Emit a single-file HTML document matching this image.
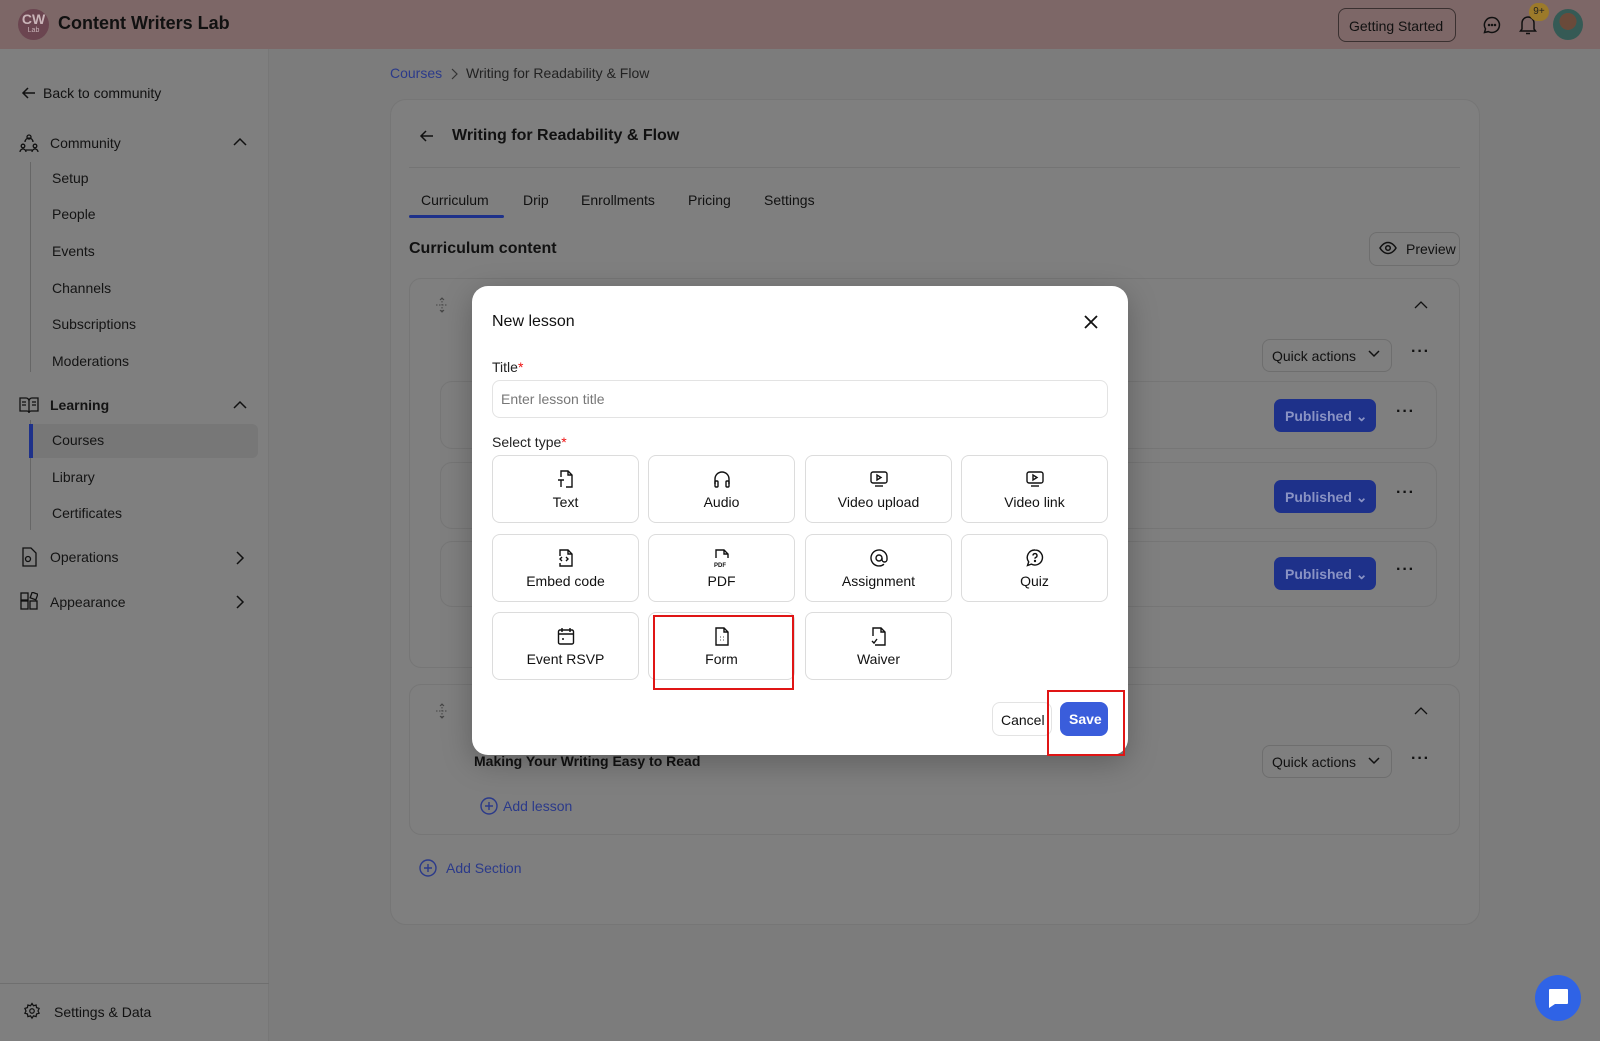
<!DOCTYPE html>
<html><head><meta charset="utf-8">
<style>
*{box-sizing:border-box;margin:0;padding:0}
body{width:1600px;height:1041px;overflow:hidden;font-family:"Liberation Sans",sans-serif;background:#7c7c7c;color:#111;position:relative;font-size:14px}
.abs{position:absolute}
.hdr{left:0;top:0;width:1600px;height:49px;background:#7d6767}
.side{left:0;top:49px;width:269px;height:992px;background:#7f7f7f;border-right:1px solid #777}
.si{position:absolute;left:52px;font-size:14px;color:#141414}
.sh{position:absolute;left:50px;font-size:14px;color:#141414}
.card{background:#7f7f7f;border:1px solid #767676;border-radius:16px}
.btn{border:1px solid #6c6c6c;border-radius:8px}
.pub{position:absolute;left:1274px;width:102px;height:33px;background:#1e318a;border-radius:7px;color:#8a93c4;font-weight:bold;font-size:14px;padding:9px 0 0 11px}
.dots{position:absolute;font-weight:bold;font-size:16px;letter-spacing:1px;color:#111}
.tile{position:absolute;width:147px;height:68px;border:1px solid #dcdcdc;border-radius:8px;background:#fff;text-align:center;font-size:14px;color:#111}
.tile svg{position:absolute;left:64px;top:13px}
.tile span{position:absolute;left:0;right:0;top:38px}
</style></head><body>
<div class="abs hdr"></div>
<div class="abs" style="left:18px;top:9px;width:31px;height:31px;border-radius:50%;background:#6b4550;color:#c9b4b8;text-align:center;font-size:14px;line-height:20px;font-weight:bold">CW<div style="font-size:7px;line-height:4px;font-weight:normal">Lab</div></div>
<div class="abs" style="left:58px;top:13px;font-size:18px;font-weight:bold;color:#111">Content Writers Lab</div>
<div class="abs btn" style="left:1338px;top:8px;width:118px;height:34px;border-color:#3a3030;font-size:14px;padding:9px 0 0 10px;color:#111">Getting Started</div>
<svg class="abs" style="left:1482px;top:15px" width="20" height="20" viewBox="0 0 20 20" fill="none" stroke="#111" stroke-width="1.5"><path d="M10 2.5a7.5 7.5 0 1 1-3.6 14.1L2.5 17.5l1-3.6A7.5 7.5 0 0 1 10 2.5z"/><circle cx="7" cy="10" r=".5" fill="#111"/><circle cx="10" cy="10" r=".5" fill="#111"/><circle cx="13" cy="10" r=".5" fill="#111"/></svg>
<svg class="abs" style="left:1518px;top:14px" width="20" height="22" viewBox="0 0 20 22" fill="none" stroke="#111" stroke-width="1.5"><path d="M4 15V9a6 6 0 0 1 12 0v6l1.5 2h-15z"/><path d="M8 19.5h4"/></svg>
<div class="abs" style="left:1529px;top:3px;width:20px;height:18px;border-radius:9px;background:#9c7a2a;color:#222;font-size:10px;text-align:center;line-height:18px">9+</div>
<div class="abs" style="left:1553px;top:9px;width:30px;height:31px;border-radius:50%;background:radial-gradient(circle at 50% 40%,#6a4a3a 0 35%,#355a55 36% 100%)"></div>

<div class="abs side"></div>
<svg class="abs" style="left:21px;top:85px" width="16" height="16" viewBox="0 0 16 16" fill="none" stroke="#111" stroke-width="1.5"><path d="M14 8H2M7 3L2 8l5 5"/></svg>
<div class="abs" style="left:43px;top:85px;font-size:14px">Back to community</div>
<svg class="abs" style="left:19px;top:133px" width="20" height="20" viewBox="0 0 20 20" fill="none" stroke="#111" stroke-width="1.3"><circle cx="10" cy="4" r="2"/><path d="M6 9a4 4 0 0 1 8 0"/><circle cx="4" cy="13" r="1.8"/><circle cx="16" cy="13" r="1.8"/><path d="M1 19a3 3 0 0 1 6 0M13 19a3 3 0 0 1 6 0M7 17h6"/></svg>
<div class="sh" style="top:135px">Community</div>
<svg class="abs" style="left:232px;top:136px" width="16" height="12" viewBox="0 0 16 12" fill="none" stroke="#111" stroke-width="1.5"><path d="M2 9l6-6 6 6"/></svg>
<div class="abs" style="left:30px;top:162px;width:1px;height:210px;background:#666"></div>
<div class="si" style="top:170px">Setup</div>
<div class="si" style="top:206px">People</div>
<div class="si" style="top:243px">Events</div>
<div class="si" style="top:280px">Channels</div>
<div class="si" style="top:316px">Subscriptions</div>
<div class="si" style="top:353px">Moderations</div>
<svg class="abs" style="left:19px;top:396px" width="20" height="18" viewBox="0 0 20 18" fill="none" stroke="#111" stroke-width="1.3"><path d="M1 2h6a3 3 0 0 1 3 3v12a2 2 0 0 0-2-2H1zM19 2h-6a3 3 0 0 0-3 3v12a2 2 0 0 1 2-2h7z"/><path d="M3 6h4M3 9h4M13 6h4M13 9h4"/></svg>
<div class="sh" style="top:397px;font-weight:bold">Learning</div>
<svg class="abs" style="left:232px;top:399px" width="16" height="12" viewBox="0 0 16 12" fill="none" stroke="#111" stroke-width="1.5"><path d="M2 9l6-6 6 6"/></svg>
<div class="abs" style="left:30px;top:420px;width:1px;height:110px;background:#666"></div>
<div class="abs" style="left:30px;top:424px;width:228px;height:34px;background:#777;border-radius:0 6px 6px 0"></div>
<div class="abs" style="left:29px;top:424px;width:4px;height:34px;background:#1e318a"></div>
<div class="si" style="top:432px">Courses</div>
<div class="si" style="top:469px">Library</div>
<div class="si" style="top:505px">Certificates</div>
<svg class="abs" style="left:20px;top:547px" width="18" height="20" viewBox="0 0 18 20" fill="none" stroke="#111" stroke-width="1.3"><path d="M3 1h8l5 5v13H3z"/><circle cx="8" cy="12" r="2.5"/></svg>
<div class="sh" style="top:549px">Operations</div>
<svg class="abs" style="left:234px;top:550px" width="12" height="16" viewBox="0 0 12 16" fill="none" stroke="#111" stroke-width="1.5"><path d="M3 2l6 6-6 6"/></svg>
<svg class="abs" style="left:20px;top:592px" width="18" height="18" viewBox="0 0 18 18" fill="none" stroke="#111" stroke-width="1.3"><rect x="1" y="9" width="7" height="8"/><rect x="10" y="9" width="7" height="8"/><rect x="1" y="1" width="7" height="7"/><rect x="11" y="1" width="6" height="6" transform="rotate(20 14 4)"/></svg>
<div class="sh" style="top:594px">Appearance</div>
<svg class="abs" style="left:234px;top:594px" width="12" height="16" viewBox="0 0 12 16" fill="none" stroke="#111" stroke-width="1.5"><path d="M3 2l6 6-6 6"/></svg>
<div class="abs" style="left:0;top:983px;width:269px;height:1px;background:#6f6f6f"></div>
<svg class="abs" style="left:23px;top:1002px" width="18" height="18" viewBox="0 0 24 24" fill="none" stroke="#111" stroke-width="1.6"><circle cx="12" cy="12" r="3"/><path d="M12 2l2 3 3.5-1 .5 3.5 3.5 1-1.5 3.5 1.5 3-3.5 1-.5 3.5-3.5-1-2 3-2-3-3.5 1-.5-3.5-3.5-1 1.5-3-1.5-3.5 3.5-1 .5-3.5 3.5 1z"/></svg>
<div class="abs" style="left:54px;top:1004px;font-size:14px">Settings &amp; Data</div>

<div class="abs" style="left:390px;top:65px;font-size:14px;color:#2b3a8a">Courses</div>
<svg class="abs" style="left:450px;top:68px" width="8" height="12" viewBox="0 0 8 12" fill="none" stroke="#333" stroke-width="1.2"><path d="M2 1l5 5-5 5"/></svg>
<div class="abs" style="left:466px;top:65px;font-size:14px;color:#222">Writing for Readability &amp; Flow</div>
<div class="abs card" style="left:390px;top:99px;width:1090px;height:826px"></div>
<svg class="abs" style="left:419px;top:128px" width="16" height="16" viewBox="0 0 16 16" fill="none" stroke="#111" stroke-width="1.5"><path d="M14 8H2M7 3L2 8l5 5"/></svg>
<div class="abs" style="left:452px;top:127px;font-size:16px;font-weight:bold;color:#111">Writing for Readability &amp; Flow</div>
<div class="abs" style="left:409px;top:167px;width:1051px;height:1px;background:#747474"></div>
<div class="abs" style="left:421px;top:192px;font-size:14px">Curriculum</div>
<div class="abs" style="left:523px;top:192px;font-size:14px">Drip</div>
<div class="abs" style="left:581px;top:192px;font-size:14px">Enrollments</div>
<div class="abs" style="left:688px;top:192px;font-size:14px">Pricing</div>
<div class="abs" style="left:764px;top:192px;font-size:14px">Settings</div>
<div class="abs" style="left:409px;top:215px;width:95px;height:3px;background:#1e318a;border-radius:2px"></div>
<div class="abs" style="left:409px;top:240px;font-size:16px;font-weight:bold">Curriculum content</div>
<div class="abs btn" style="left:1369px;top:232px;width:91px;height:34px;border-color:#6e6e6e;padding:8px 0 0 36px;font-size:14px">Preview</div>
<svg class="abs" style="left:1379px;top:241px" width="18" height="14" viewBox="0 0 18 14" fill="none" stroke="#111" stroke-width="1.5"><path d="M1 7s3-5.5 8-5.5S17 7 17 7s-3 5.5-8 5.5S1 7 1 7z"/><circle cx="9" cy="7" r="2.3"/></svg>

<div class="abs card" style="left:409px;top:278px;width:1051px;height:390px;border-radius:12px"></div>
<svg class="abs" style="left:435px;top:297px" width="14" height="16" viewBox="0 0 14 16" fill="none" stroke="#444" stroke-width="1" stroke-dasharray="1.5 1.5"><path d="M7 1v14M1 8h12"/><path d="M5 3l2-2 2 2M5 13l2 2 2-2" stroke-dasharray="none"/></svg>
<svg class="abs" style="left:1413px;top:300px" width="16" height="10" viewBox="0 0 16 10" fill="none" stroke="#111" stroke-width="1.3"><path d="M2 8l6-6 6 6"/></svg>
<div class="abs btn" style="left:1262px;top:339px;width:130px;height:33px;border-color:#6e6e6e;padding:8px 0 0 9px;font-size:14px">Quick actions</div>
<svg class="abs" style="left:1367px;top:349px" width="14" height="10" viewBox="0 0 14 10" fill="none" stroke="#111" stroke-width="1.5"><path d="M2 2l5 5 5-5"/></svg>
<div class="dots" style="left:1411px;top:343px">···</div>
<div class="abs card" style="left:440px;top:381px;width:997px;height:68px;border-radius:12px"></div>
<div class="abs card" style="left:440px;top:462px;width:997px;height:67px;border-radius:12px"></div>
<div class="abs card" style="left:440px;top:541px;width:997px;height:66px;border-radius:12px"></div>
<div class="pub" style="top:399px">Published ⌄</div>
<div class="pub" style="top:480px">Published ⌄</div>
<div class="pub" style="top:557px">Published ⌄</div>
<div class="dots" style="left:1396px;top:403px">···</div>
<div class="dots" style="left:1396px;top:484px">···</div>
<div class="dots" style="left:1396px;top:561px">···</div>

<div class="abs card" style="left:409px;top:684px;width:1051px;height:151px;border-radius:12px"></div>
<svg class="abs" style="left:435px;top:703px" width="14" height="16" viewBox="0 0 14 16" fill="none" stroke="#444" stroke-width="1" stroke-dasharray="1.5 1.5"><path d="M7 1v14M1 8h12"/><path d="M5 3l2-2 2 2M5 13l2 2 2-2" stroke-dasharray="none"/></svg>
<svg class="abs" style="left:1413px;top:706px" width="16" height="10" viewBox="0 0 16 10" fill="none" stroke="#111" stroke-width="1.3"><path d="M2 8l6-6 6 6"/></svg>
<div class="abs" style="left:474px;top:753px;font-size:14px;font-weight:bold;color:#111">Making Your Writing Easy to Read</div>
<div class="abs btn" style="left:1262px;top:745px;width:130px;height:33px;border-color:#6e6e6e;padding:8px 0 0 9px;font-size:14px">Quick actions</div>
<svg class="abs" style="left:1367px;top:756px" width="14" height="10" viewBox="0 0 14 10" fill="none" stroke="#111" stroke-width="1.5"><path d="M2 2l5 5 5-5"/></svg>
<div class="dots" style="left:1411px;top:750px">···</div>
<svg class="abs" style="left:480px;top:797px" width="18" height="18" viewBox="0 0 18 18" fill="none" stroke="#2b3a8a" stroke-width="1.4"><circle cx="9" cy="9" r="8"/><path d="M9 5v8M5 9h8"/></svg>
<div class="abs" style="left:503px;top:798px;font-size:14px;color:#2b3a8a">Add lesson</div>
<svg class="abs" style="left:419px;top:859px" width="18" height="18" viewBox="0 0 18 18" fill="none" stroke="#2b3a8a" stroke-width="1.4"><circle cx="9" cy="9" r="8"/><path d="M9 5v8M5 9h8"/></svg>
<div class="abs" style="left:446px;top:860px;font-size:14px;color:#2b3a8a">Add Section</div>

<div class="abs" style="left:472px;top:286px;width:656px;height:469px;background:#fff;border-radius:16px;box-shadow:0 8px 30px rgba(0,0,0,.25)"></div>
<div class="abs" style="left:492px;top:313px;font-size:16px;color:#111">New lesson</div>
<svg class="abs" style="left:1083px;top:314px" width="16" height="16" viewBox="0 0 16 16" fill="none" stroke="#111" stroke-width="1.8"><path d="M2 2l12 12M14 2L2 14"/></svg>
<div class="abs" style="left:492px;top:359px;font-size:14px;color:#222">Title<span style="color:#e11">*</span></div>
<div class="abs" style="left:492px;top:380px;width:616px;height:38px;border:1px solid #e3e3e3;border-radius:8px;padding:10px 0 0 8px;color:#777;font-size:14px">Enter lesson title</div>
<div class="abs" style="left:492px;top:434px;font-size:14px;color:#222">Select type<span style="color:#e11">*</span></div>

<div class="tile" style="left:492px;top:455px"><svg width="18" height="20" viewBox="0 0 18 20" fill="none" stroke="#111" stroke-width="1.4"><path d="M4 8V2h7l4 4v12H9"/><path d="M11 2v4h4"/><path d="M1 11h6M4 11v7"/></svg><span>Text</span></div>
<div class="tile" style="left:648px;top:455px"><svg width="18" height="20" viewBox="0 0 18 20" fill="none" stroke="#111" stroke-width="1.4"><path d="M2 15v-5a7 7 0 0 1 14 0v5"/><rect x="2" y="12" width="3" height="6" rx="1"/><rect x="13" y="12" width="3" height="6" rx="1"/></svg><span>Audio</span></div>
<div class="tile" style="left:805px;top:455px"><svg width="18" height="20" viewBox="0 0 18 20" fill="none" stroke="#111" stroke-width="1.4"><rect x="1" y="3" width="16" height="11" rx="2"/><path d="M7 6v5l4-2.5z"/><path d="M5 17h8"/></svg><span>Video upload</span></div>
<div class="tile" style="left:961px;top:455px"><svg width="18" height="20" viewBox="0 0 18 20" fill="none" stroke="#111" stroke-width="1.4"><rect x="1" y="3" width="16" height="11" rx="2"/><path d="M7 6v5l4-2.5z"/><path d="M5 17h8"/></svg><span>Video link</span></div>

<div class="tile" style="left:492px;top:534px"><svg width="18" height="20" viewBox="0 0 18 20" fill="none" stroke="#111" stroke-width="1.4"><path d="M3 8V2h8l4 4v12H3v-3"/><path d="M11 2v4h4"/><path d="M5 9l-2 2 2 2M9 9l2 2-2 2"/></svg><span>Embed code</span></div>
<div class="tile" style="left:648px;top:534px"><svg width="18" height="20" viewBox="0 0 18 20" fill="none" stroke="#111" stroke-width="1.4"><path d="M3 10V2h8l4 4v4"/><path d="M11 2v4h4"/><text x="1" y="19" font-size="6" font-family="Liberation Sans" fill="#111" stroke="none" font-weight="bold">PDF</text></svg><span>PDF</span></div>
<div class="tile" style="left:805px;top:534px"><svg width="18" height="20" viewBox="0 0 18 20" fill="none" stroke="#111" stroke-width="1.4"><circle cx="9" cy="10" r="3"/><path d="M12 10v1.5a2.5 2.5 0 0 0 5 0V10a8 8 0 1 0-3 6.2"/></svg><span>Assignment</span></div>
<div class="tile" style="left:961px;top:534px"><svg width="18" height="20" viewBox="0 0 18 20" fill="none" stroke="#111" stroke-width="1.4"><path d="M9 2a7.5 7.5 0 1 1-3.6 14.1L1.5 17.5l1.2-3.6A7.5 7.5 0 0 1 9 2z"/><path d="M7 7.5a2 2 0 1 1 2.5 2c-.5.2-.5.6-.5 1.2"/><circle cx="9" cy="13" r=".5" fill="#111"/></svg><span>Quiz</span></div>

<div class="tile" style="left:492px;top:612px"><svg width="18" height="20" viewBox="0 0 18 20" fill="none" stroke="#111" stroke-width="1.4"><rect x="1.5" y="4" width="15" height="14" rx="1.5"/><path d="M1.5 8h15M5 2v4M13 2v4M5 13h2"/></svg><span>Event RSVP</span></div>
<div class="tile" style="left:648px;top:612px"><svg width="18" height="20" viewBox="0 0 18 20" fill="none" stroke="#111" stroke-width="1.4"><path d="M3 2h8l4 4v13H3z"/><path d="M11 2v4h4"/><path d="M7 11h.5M10.5 11h.5M7 14h.5M10.5 14h.5"/></svg><span>Form</span></div>
<div class="tile" style="left:805px;top:612px"><svg width="18" height="20" viewBox="0 0 18 20" fill="none" stroke="#111" stroke-width="1.4"><path d="M3 10V2h8l4 4v13H5"/><path d="M11 2v4h4"/><path d="M2 15l2 2 3-4"/></svg><span>Waiver</span></div>

<div class="abs" style="left:653px;top:615px;width:141px;height:75px;border:2px solid #e01515"></div>

<div class="abs" style="left:992px;top:702px;width:60px;height:34px;border:1px solid #e3e3e3;border-radius:8px;padding:9px 0 0 8px;font-size:14px;color:#111">Cancel</div>
<div class="abs" style="left:1060px;top:702px;width:48px;height:34px;background:#3a5ddb;border-radius:8px;color:#fff;font-weight:bold;font-size:14px;padding:9px 0 0 9px">Save</div>
<div class="abs" style="left:1047px;top:690px;width:78px;height:66px;border:2px solid #e01515"></div>

<div class="abs" style="left:1535px;top:975px;width:46px;height:46px;border-radius:50%;background:#2f63e6"></div>
<svg class="abs" style="left:1546px;top:987px" width="24" height="22" viewBox="0 0 24 22"><path d="M3 2h18a1 1 0 0 1 1 1v13a1 1 0 0 1-1 1H9l-6 4V3a1 1 0 0 1 1-1z" fill="#fff"/></svg>
</body></html>
